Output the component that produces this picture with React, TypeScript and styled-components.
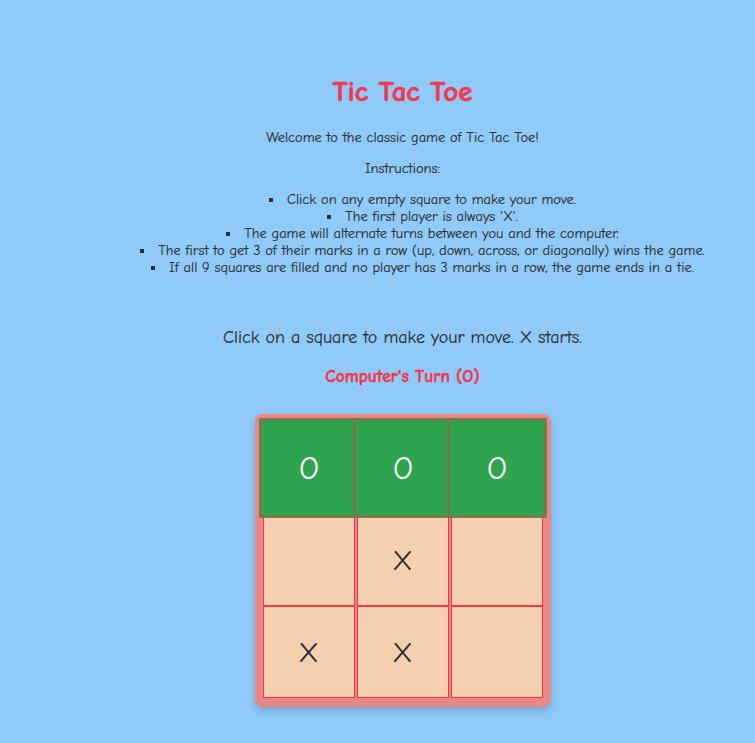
import React from "react";
import styled, { createGlobalStyle } from "styled-components";

const GlobalStyle = createGlobalStyle`
  html, body {
    margin: 0;
    padding: 0;
    background: #90caf9;
  }
  body {
    font-family: "Comic Neue", "Comic Sans MS", "Open Sans", sans-serif;
    color: #2e2e2e;
  }
`;

const Page = styled.div`
  display: flex;
  flex-direction: column;
  align-items: center;
  padding: 76px 0 40px 50px;
  text-align: center;
`;

const Title = styled.h1`
  margin: 0;
  font-size: 29px;
  line-height: 32px;
  font-weight: 700;
  color: #f03a4f;
  -webkit-text-stroke: 0.7px #f03a4f;
`;

const Text = styled.p<{ $top: number }>`
  margin: ${(p) => p.$top}px 0 0;
  font-size: 14.4px;
  line-height: 17px;
  -webkit-text-stroke: 0.15px #2e2e2e;
`;

const List = styled.ul`
  align-self: stretch;
  margin: 14px 0 0;
  padding: 0 0 0 40px;
  list-style: none;
`;

const Item = styled.li`
  font-size: 14.4px;
  line-height: 17px;
  -webkit-text-stroke: 0.15px #2e2e2e;
  &::before {
    content: "";
    display: inline-block;
    width: 4px;
    height: 4px;
    background: #2e2e2e;
    vertical-align: middle;
    margin: 0 14px 2px 0;
  }
`;

const Status = styled.p`
  margin: 51px 0 0;
  font-size: 18px;
  line-height: 22px;
  -webkit-text-stroke: 0.15px #2e2e2e;
`;

const Turn = styled.p`
  margin: 17px 0 0;
  font-size: 17.5px;
  line-height: 20px;
  font-weight: 700;
  color: #f03a4f;
  -webkit-text-stroke: 0.5px #f03a4f;
`;

const Board = styled.div`
  margin-top: 28px;
  display: grid;
  grid-template-columns: repeat(3, 92px);
  grid-auto-rows: 92px;
  column-gap: 2px;
  padding: 8px 8px 9px;
  background: #e88888;
  border-radius: 8px;
  box-shadow: 0 4px 8px rgba(0, 0, 0, 0.18);
`;

const Cell = styled.div<{ $win: boolean; $mark: string }>`
  box-sizing: border-box;
  display: flex;
  align-items: center;
  justify-content: center;
  border: ${(p) => (p.$win ? "2px solid #8e6b48" : "1px solid #ff3347")};
  background: ${(p) => (p.$win ? "#2ea44f" : "#f4d0ae")};
  color: ${(p) => (p.$mark === "O" || p.$win ? "#ffffff" : "#2a2a2a")};
  font-size: 29px;
  transform: ${(p) => (p.$win ? "scale(1.08)" : "none")};
`;

const cells = ["O", "O", "O", "", "X", "", "X", "X", ""];
const winning = [0, 1, 2];

const rules = [
  "Click on any empty square to make your move.",
  "The first player is always 'X'.",
  "The game will alternate turns between you and the computer.",
  "The first to get 3 of their marks in a row (up, down, across, or diagonally) wins the game.",
  "If all 9 squares are filled and no player has 3 marks in a row, the game ends in a tie.",
];

export default function App() {
  return (
    <>
      <GlobalStyle />
      <Page>
        <Title>Tic Tac Toe</Title>
        <Text $top={21}>Welcome to the classic game of Tic Tac Toe!</Text>
        <Text $top={14}>Instructions:</Text>
        <List>
          {rules.map((r) => (
            <Item key={r}>{r}</Item>
          ))}
        </List>
        <Status>Click on a square to make your move. X starts.</Status>
        <Turn>Computer's Turn (O)</Turn>
        <Board>
          {cells.map((c, i) => (
            <Cell key={i} $win={winning.includes(i)} $mark={c}>
              {c}
            </Cell>
          ))}
        </Board>
      </Page>
    </>
  );
}
